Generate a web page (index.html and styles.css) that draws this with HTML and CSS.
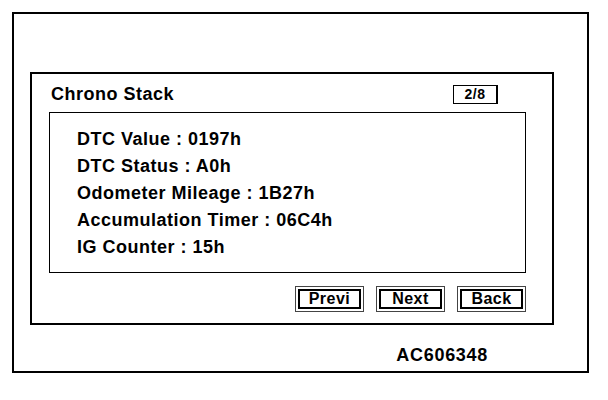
FILE: index.html
```html
<!DOCTYPE html>
<html>

<head>
    <meta charset="UTF-8">
    <title>Chrono Stack</title>
    <link rel="stylesheet" href="styles.css">
</head>

<body>
    <div class="frame">
        <div class="panel">
            <div class="panel-head">
                <h2 class="title">Chrono Stack</h2>
                <span class="page">2/8</span>
            </div>
            <ul class="info">
                <li>DTC Value : 0197h</li>
                <li>DTC Status : A0h</li>
                <li>Odometer Mileage : 1B27h</li>
                <li>Accumulation Timer : 06C4h</li>
                <li>IG Counter : 15h</li>
            </ul>
            <div class="actions">
                <a href="javascript:;" class="btn"><span>Previ</span></a>
                <a href="javascript:;" class="btn"><span>Next</span></a>
                <a href="javascript:;" class="btn"><span>Back</span></a>
            </div>
        </div>
        <div class="code">AC606348</div>
    </div>
</body>

</html>
```

FILE: styles.css
```css
@charset "UTF-8";
/*reset*/

body,
h2,
ul,
li {
    margin: 0;
    padding: 0;
}

ul {
    list-style: none;
}

a {
    text-decoration: none;
    color: #000;
}

body {
    font: bold 18px/1.2 "Liberation Sans", Arial, sans-serif;
    letter-spacing: 0.5px;
    color: #000;
    background: #fff;
}

/*外框*/
.frame {
    box-sizing: border-box;
    width: 577px;
    height: 361px;
    margin: 12px 0 0 12px;
    border: 2px solid #000;
    padding: 58px 33px 0 16px;
}

.panel {
    box-sizing: border-box;
    height: 253px;
    border: 2px solid #000;
    padding: 11px 26px 11px 17px;
}

.panel-head {
    display: flex;
    justify-content: space-between;
    align-items: center;
    height: 19px;
    padding: 0 28px 0 2px;
    margin-bottom: 8px;
}

.title {
    font-size: 18px;
    line-height: 19px;
}

.page {
    box-sizing: border-box;
    width: 45px;
    height: 19px;
    border: 1px solid #000;
    border-right-width: 2px;
    font-size: 14px;
    line-height: 17px;
    text-align: center;
}

.info {
    box-sizing: border-box;
    height: 161px;
    border: 1px solid #000;
    padding: 13px 0 0 27px;
}

.info li {
    line-height: 27px;
}

.actions {
    display: flex;
    justify-content: flex-end;
    gap: 12px;
    margin-top: 13px;
}

.btn {
    box-sizing: border-box;
    width: 69px;
    height: 26px;
    border: 1px solid #444;
    padding: 2px;
}

.btn span {
    box-sizing: border-box;
    display: flex;
    justify-content: center;
    align-items: center;
    height: 100%;
    border: 2px solid #000;
    font-size: 16px;
}

.code {
    margin-top: 21px;
    padding-right: 66px;
    text-align: right;
    font-size: 18px;
    letter-spacing: 0.7px;
    line-height: 18px;
}
```
